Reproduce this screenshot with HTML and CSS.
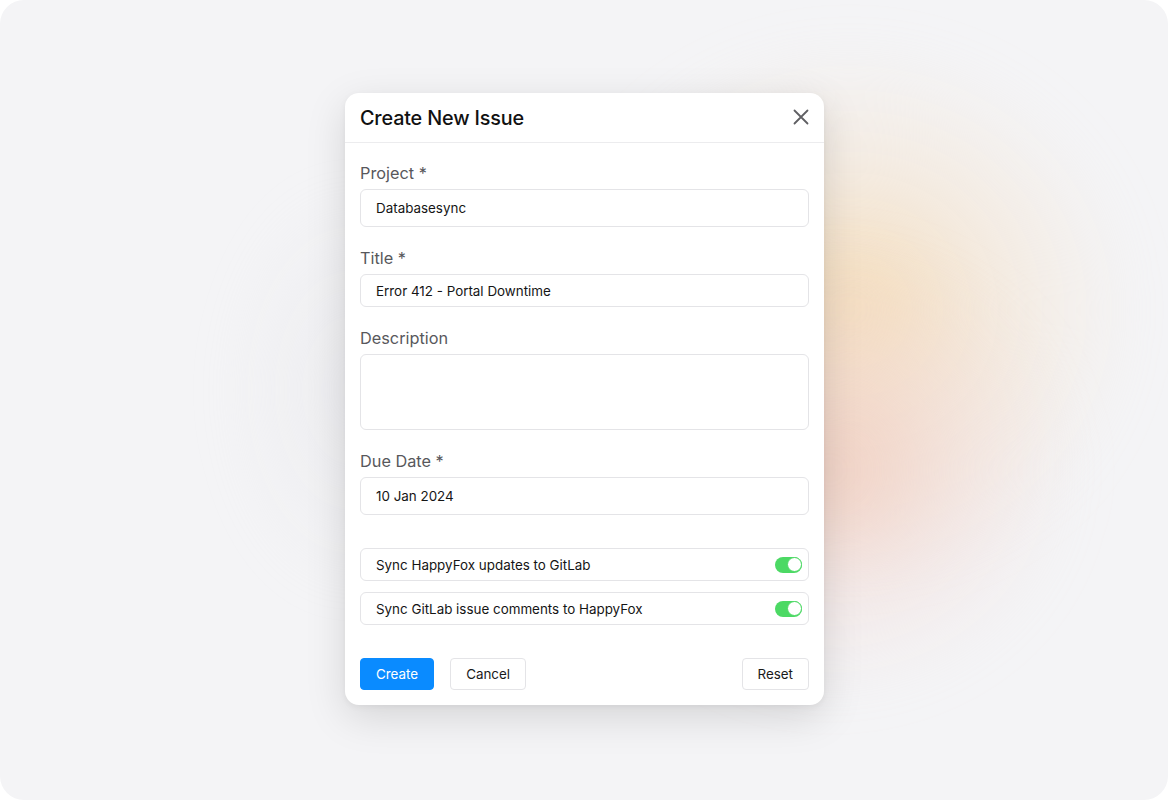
FILE: index.html
```html
<!DOCTYPE html>
<html lang="en">
<head>
<meta charset="utf-8">
<title>Create New Issue</title>
<link rel="stylesheet" href="styles.css">
</head>
<body>
<div class="stage">
  <div class="glow glow-warm"></div>
  <div class="glow glow-pink"></div>
  <div class="glow glow-gray"></div>
  <div class="modal">
    <div class="modal-header">
      <h1 class="modal-title">Create New Issue</h1>
      <button class="close" aria-label="Close">
        <svg width="16" height="16" viewBox="0 0 16 16"><path d="M1.5 1.5L14.5 14.5M14.5 1.5L1.5 14.5" stroke="#5f5f63" stroke-width="1.8" stroke-linecap="round"/></svg>
      </button>
    </div>
    <div class="modal-body">
      <div class="field">
        <label class="label">Project *</label>
        <div class="input tall">Databasesync</div>
      </div>
      <div class="field">
        <label class="label">Title *</label>
        <div class="input short">Error 412 - Portal Downtime</div>
      </div>
      <div class="field">
        <label class="label">Description</label>
        <div class="input area"></div>
      </div>
      <div class="field">
        <label class="label">Due Date *</label>
        <div class="input tall">10 Jan 2024</div>
      </div>
      <div class="toggles">
        <div class="toggle-row">
          <span>Sync HappyFox updates to GitLab</span>
          <span class="switch"><span class="knob"></span></span>
        </div>
        <div class="toggle-row">
          <span>Sync GitLab issue comments to HappyFox</span>
          <span class="switch"><span class="knob"></span></span>
        </div>
      </div>
      <div class="footer">
        <button class="btn primary">Create</button>
        <button class="btn">Cancel</button>
        <span class="spacer"></span>
        <button class="btn">Reset</button>
      </div>
    </div>
  </div>
</div>
</body>
</html>
```

FILE: styles.css
```css
* { box-sizing: border-box; }
html, body { margin: 0; padding: 0; background: #ffffff; }
body { font-family: Inter, "Noto Sans", "Liberation Sans", sans-serif; color: #1a1a1a; }

.stage {
  position: relative;
  width: 1168px;
  height: 800px;
  background: #f4f4f6;
  border-radius: 24px;
  overflow: hidden;
  display: flex;
  justify-content: center;
  align-items: flex-start;
  padding-top: 93px;
  padding-left: 1px;
}

.glow {
  position: absolute;
  border-radius: 50%;
  pointer-events: none;
}
.glow-warm {
  left: 570px; top: 50px; width: 560px; height: 520px;
  background: radial-gradient(closest-side, rgba(245, 218, 178, 0.95), rgba(244, 226, 204, 0.55) 50%, rgba(244, 244, 246, 0) 100%);
  filter: blur(30px);
}
.glow-pink {
  left: 590px; top: 250px; width: 480px; height: 440px;
  background: radial-gradient(closest-side, rgba(240, 198, 182, 0.75), rgba(242, 216, 210, 0.4) 55%, rgba(244, 244, 246, 0) 100%);
  filter: blur(30px);
}
.glow-gray {
  left: 220px; top: 180px; width: 260px; height: 420px;
  background: radial-gradient(closest-side, rgba(228, 228, 232, 0.4), rgba(244, 244, 246, 0) 100%);
  filter: blur(20px);
}

.modal {
  position: relative;
  width: 479px;
  background: #ffffff;
  border-radius: 14px;
  box-shadow: 0 12px 40px rgba(0, 0, 0, 0.13), 0 2px 6px rgba(0, 0, 0, 0.05);
}

.modal-header {
  height: 50px;
  padding: 0 15px;
  display: flex;
  align-items: center;
  justify-content: space-between;
  border-bottom: 1px solid #ececee;
}
.modal-title {
  margin: 0;
  font-size: 19.8px;
  font-weight: 500;
  color: #111111;
  letter-spacing: -0.15px;
}
.close {
  border: 0;
  background: transparent;
  padding: 0;
  width: 16px;
  height: 16px;
  display: flex;
  margin-top: -1px;
}

.modal-body { padding: 20px 15px 15px; }

.field { margin-bottom: 21px; }
.field:nth-child(4) { margin-bottom: 0; }
.label {
  display: block;
  font-size: 16.3px;
  line-height: 20px;
  color: #58585c;
  margin-bottom: 6px;
}
.input {
  width: 100%;
  border: 1px solid #e4e4e7;
  border-radius: 6px;
  font-size: 13.4px;
  color: #151515;
  padding: 0 15px;
  display: flex;
  align-items: center;
}
.input.tall { height: 38px; }
.input.short { height: 33px; }
.input.area { height: 76px; }

.toggles {
  margin-top: 33px;
  display: flex;
  flex-direction: column;
  gap: 11px;
}
.toggle-row {
  height: 33px;
  border: 1px solid #e4e4e7;
  border-radius: 6px;
  padding: 0 6px 0 15px;
  display: flex;
  align-items: center;
  justify-content: space-between;
  font-size: 13.4px;
  color: #151515;
}
.switch {
  position: relative;
  width: 27px;
  height: 16px;
  border-radius: 8px;
  background: #4cd964;
}
.knob {
  position: absolute;
  right: 0.5px;
  top: 0.5px;
  width: 15px;
  height: 15px;
  border-radius: 50%;
  background: #ffffff;
  border: 1px solid #4cd964;
}

.footer {
  margin-top: 33px;
  display: flex;
  align-items: center;
  gap: 16px;
}
.spacer { flex: 1; }
.btn {
  height: 32px;
  padding: 0 15px;
  font-family: Inter, "Noto Sans", "Liberation Sans", sans-serif;
  font-size: 13.4px;
  color: #1a1a1a;
  background: #ffffff;
  border: 1px solid #e4e4e7;
  border-radius: 4px;
}
.btn.primary {
  background: #0a8bff;
  border-color: #0a8bff;
  color: #ffffff;
}
```
